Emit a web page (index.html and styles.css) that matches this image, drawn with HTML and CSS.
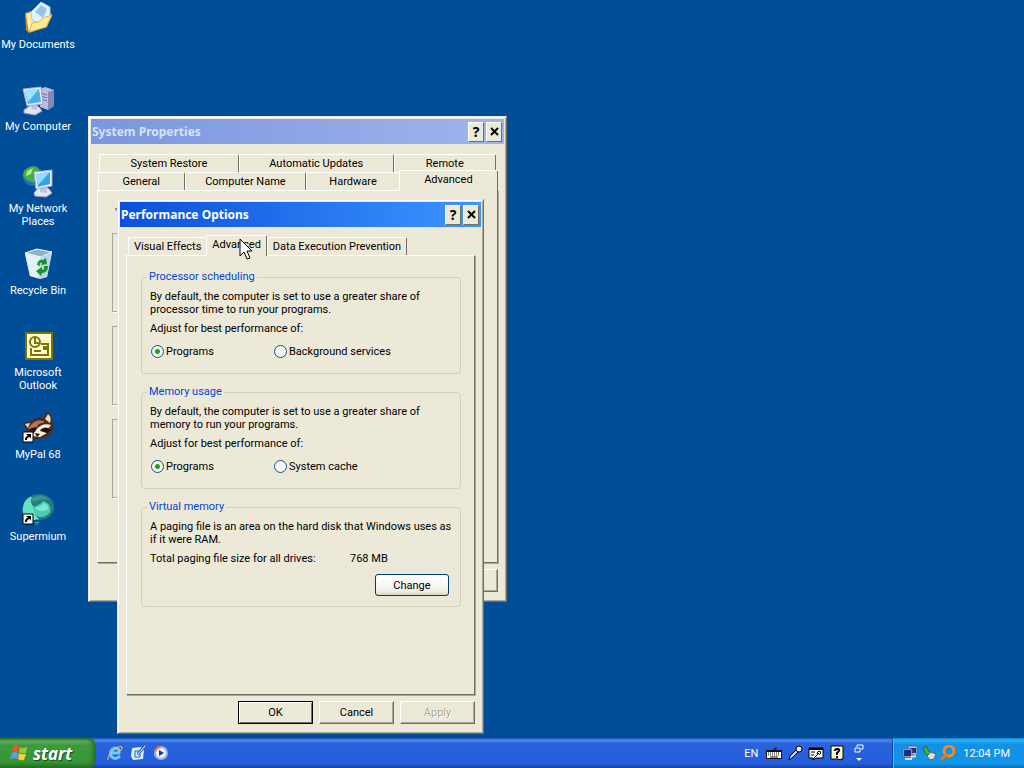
FILE: index.html
```html
<!DOCTYPE html>
<html lang="en">
<head>
    <meta charset="utf-8">
    <title>Desktop</title>
    <link rel="stylesheet" href="styles.css">
</head>
<body>
    <main class="desktop">
        <nav class="icons">
            <a class="icon" href="#documents">
                <svg viewBox="0 0 32 32">
                    <path d="M3 11L9 9L12 13L27 8L30 13L25 25L7 31L4 28Z" fill="#c98f1c"/>
                    <path d="M4 12L9 10L13 14L27 10L25 25L7 30Z" fill="#ffe995"/>
                    <path d="M9 10L19 0L28 5V17L19 22L10 18Z" fill="#e4f2ff" stroke="#a8caec"/>
                    <path d="M13 10L19 3L25 7L21 16Z" fill="#93c5f0"/>
                    <path d="M4 12L7 30L24 25L30 13L21 16L17 20L7 22Z" fill="#ffe27a"/>
                    <path d="M7 30L24 25L30 13L21 16L17 20L10 21Z" fill="#ffeb9c" stroke="#e3b23c"/>
                    <path d="M5 14L7 28L9 22Z" fill="#fff6c4"/>
                </svg>
                <span>My Documents</span>
            </a>
            <a class="icon" href="#computer">
                <svg viewBox="0 0 32 32">
                    <path d="M18 5L23 3L32 6V22L26 26L18 23Z" fill="#b9bce0"/>
                    <path d="M26 8L32 6V22L26 26Z" fill="#8487b8"/>
                    <path d="M19 9L25 11M19 12L25 14M19 15L25 17" stroke="#6b6ea0"/>
                    <path d="M9 21L17 23L20 27L13 31L2 29L2 26Z" fill="#e3e3f3" stroke="#a0a2c8"/>
                    <path d="M10 19L16 20L15 26L9 25Z" fill="#bfc2df"/>
                    <path d="M1 5L19 3L21 20L5 22Z" fill="#e8ecfa" stroke="#9da9cf"/>
                    <path d="M3 7L17 5L19 18L6 20Z" fill="#49aef0"/>
                    <path d="M3 7L17 5L6 18Z" fill="#9be3ff"/>
                </svg>
                <span>My Computer</span>
            </a>
            <a class="icon" href="#network">
                <svg viewBox="0 0 32 32">
                    <circle cx="11" cy="10" r="10" fill="#2470c4"/>
                    <path d="M2 5Q8 -1 15 1L18 6L12 9L12 17L5 14L1 10Z" fill="#46b03a"/>
                    <path d="M5 5L11 2L9 8L4 10Z" fill="#b0ec83"/>
                    <path d="M17 21L26 22L30 27L24 31L13 30L12 27Z" fill="#e6e6f5" stroke="#a2a4ca"/>
                    <path d="M18 20H25V27L18 26Z" fill="#bfc2df"/>
                    <path d="M12 6L30 4V20L14 23Z" fill="#edf2fd" stroke="#9caad0"/>
                    <path d="M14 8L28 6V18L16 21Z" fill="#39a2ee"/>
                    <path d="M14 8L28 6L16 19Z" fill="#91ddff"/>
                </svg>
                <span>My Network Places</span>
            </a>
            <a class="icon" href="#recycle">
                <svg viewBox="0 0 32 32">
                    <path d="M3 5L15 1L30 4L25 29L18 31L8 28Z" fill="#cfe5f1"/>
                    <path d="M3 5L15 1L30 4L19 9Z" fill="#8fb3cc" stroke="#eefaff"/>
                    <path d="M3 6L18 9L16 30L8 28Z" fill="#e4f2f9"/>
                    <path d="M19 9L30 5L25 29L17 31Z" fill="#b5d5e8"/>
                    <path d="M15 17Q16 11 21 12L24 10L25 16L19 17L20 15Q17 14 18 18ZM26 18Q26 25 20 25L19 28L14 23L20 19V22Q23 22 22 18Z" fill="#169423"/>
                </svg>
                <span>Recycle Bin</span>
            </a>
            <a class="icon" href="#outlook">
                <svg viewBox="0 0 32 32">
                    <path d="M3 2H31V30H3Z" fill="#807400"/>
                    <path d="M5 4H29V28H5Z" fill="#fffdd0"/>
                    <path d="M19 14H26V25H9V18" fill="none" stroke="#807400" stroke-width="2"/>
                    <circle cx="13" cy="12" r="5" fill="#fffdd0" stroke="#807400" stroke-width="2"/>
                    <path d="M13 8V13H17M12 21H19" fill="none" stroke="#807400" stroke-width="2"/>
                    <path d="M21 16H25V20H21Z" fill="#807400"/>
                </svg>
                <span>Microsoft Outlook</span>
            </a>
            <a class="icon" href="#mypal">
                <svg viewBox="0 0 32 32">
                    <path d="M2 13Q3 8 8 10Q14 4 21 6L25 0Q30 1 30 9Q33 16 29 21Q23 28 13 27Q5 23 2 13Z" fill="#4c2a1c"/>
                    <path d="M23 7L26 2Q30 5 28 11ZM3 12L8 11L6 16Z" fill="#f1d8c0"/>
                    <path d="M9 13Q15 6 23 10L17 12L13 17L6 17Z" fill="#a67a5c"/>
                    <path d="M14 18Q20 10 29 13L27 16Q21 14 18 19L25 21L18 25L10 24Z" fill="#fbecdc"/>
                    <path d="M18 18Q23 14 29 18L25 21ZM7 17L14 15L13 20Z" fill="#1d100c"/>
                    <path d="M13 21L18 22L15 25Z" fill="#111"/>
                    <path d="M1 20H11V30H1Z" fill="#fff" stroke="#000"/>
                    <path d="M3 28Q3 24 6 24L4 22H9V27L8 25Q5 25 5 28Z"/>
                </svg>
                <span>MyPal 68</span>
            </a>
            <a class="icon" href="#supermium">
                <svg viewBox="0 0 32 32">
                    <ellipse cx="17" cy="13" rx="15" ry="13" fill="#247b80"/>
                    <path d="M2 9Q6 2 10 3Q7 9 13 14Q12 20 17 25L8 27Q-1 22 1 13Z" fill="#66e2c3"/>
                    <path d="M9 5Q18 -2 28 6Q20 4 11 8Z" fill="#3b9590"/>
                    <path d="M11 13Q18 11 21 7Q30 10 28 18Q24 24 17 23Q11 20 11 13Z" fill="#4acdb4"/>
                    <path d="M13 14Q20 12 22 9Q27 12 26 15Q20 20 13 14Z" fill="#7be8d0"/>
                    <path d="M12 29L17 28L14 31" fill="none" stroke="#35b6ae"/>
                    <path d="M1 20H11V30H1Z" fill="#fff" stroke="#000"/>
                    <path d="M3 28Q3 24 6 24L4 22H9V27L8 25Q5 25 5 28Z"/>
                </svg>
                <span>Supermium</span>
            </a>
        </nav>

        <section class="window system">
            <header class="titlebar inactive">
                <h2>System Properties</h2>
                <button class="caption" aria-label="Help">?</button>
                <button class="caption" aria-label="Close"><svg viewBox="0 0 9 9"><path d="M1 1L8 8M8 1L1 8"/></svg></button>
            </header>
            <div class="tabs back-row">
                <button class="tab">System Restore</button>
                <button class="tab">Automatic Updates</button>
                <button class="tab">Remote</button>
            </div>
            <div class="tabs front-row">
                <button class="tab">General</button>
                <button class="tab">Computer Name</button>
                <button class="tab">Hardware</button>
                <button class="tab active">Advanced</button>
            </div>
            <div class="panel">
                <p>'</p>
                <div class="section"></div>
                <div class="section"></div>
                <div class="section"></div>
            </div>
            <footer class="buttons">
                <button class="btn" aria-label="Apply"></button>
            </footer>
        </section>

        <section class="window performance">
            <header class="titlebar">
                <h2>Performance Options</h2>
                <button class="caption" aria-label="Help">?</button>
                <button class="caption" aria-label="Close"><svg viewBox="0 0 9 9"><path d="M1 1L8 8M8 1L1 8"/></svg></button>
            </header>
            <div class="tabs">
                <button class="tab">Visual Effects</button>
                <button class="tab active">Advanced</button>
                <button class="tab">Data Execution Prevention</button>
            </div>
            <div class="panel">
                <fieldset>
                    <legend>Processor scheduling</legend>
                    <p>By default, the computer is set to use a greater share of processor time to run your programs.</p>
                    <p>Adjust for best performance of:</p>
                    <div class="choices">
                        <label><input type="radio" name="cpu" checked>Programs</label>
                        <label><input type="radio" name="cpu">Background services</label>
                    </div>
                </fieldset>
                <fieldset>
                    <legend>Memory usage</legend>
                    <p>By default, the computer is set to use a greater share of memory to run your programs.</p>
                    <p>Adjust for best performance of:</p>
                    <div class="choices">
                        <label><input type="radio" name="memory" checked>Programs</label>
                        <label><input type="radio" name="memory">System cache</label>
                    </div>
                </fieldset>
                <fieldset>
                    <legend>Virtual memory</legend>
                    <p>A paging file is an area on the hard disk that Windows uses as if it were RAM.</p>
                    <p class="total"><span>Total paging file size for all drives:</span><span>768 MB</span></p>
                    <button class="change">Change</button>
                </fieldset>
            </div>
            <footer class="buttons">
                <button class="btn default">OK</button>
                <button class="btn">Cancel</button>
                <button class="btn" disabled>Apply</button>
            </footer>
        </section>

        <svg class="cursor" viewBox="0 0 13 22">
            <path d="M1 1V18L5 14L8 21L11 20L8 13H13Z" fill="#fff" stroke="#000"/>
        </svg>
    </main>

    <footer class="taskbar">
        <button class="start">
            <svg viewBox="0 0 20 20">
                <path d="M4 3Q7 1 10 3L9 9Q6 7 3 9Z" fill="#f0552b"/>
                <path d="M11 4Q14 6 18 4L17 10Q13 11 10 9Z" fill="#8dcc43"/>
                <path d="M3 10Q6 8 9 10L8 16Q5 14 1 16Z" fill="#5b9bf5"/>
                <path d="M10 10Q13 12 17 11L15 17Q12 18 9 16Z" fill="#ffd033"/>
            </svg>
            start
        </button>
        <div class="quick">
            <svg viewBox="0 0 16 16">
                <path d="M13 11Q8 16 4 11Q2 5 8 3Q13 3 12 8H5" fill="none" stroke="#71c9ff" stroke-width="3"/>
                <path d="M1 15Q0 10 8 4Q14 0 15 2Q16 4 13 6" fill="none" stroke="#efc64d"/>
            </svg>
            <svg viewBox="0 0 16 16">
                <path d="M2 3L11 2L14 5L13 14L3 15L1 11Z" fill="#d8effd"/>
                <path d="M10 6H5V12H10V9H7" fill="none" stroke="#2462a8"/>
                <path d="M8 9L14 2" stroke="#2462a8" stroke-width="3"/>
                <path d="M8 9L15 1" stroke="#fff"/>
            </svg>
            <svg viewBox="0 0 16 16">
                <circle cx="8" cy="8" r="6" fill="#e9f0fa" stroke="#9fb6d8" stroke-width="2"/>
                <path d="M2 7Q3 2 8 2" fill="none" stroke="#ed7b31" stroke-width="2"/>
                <path d="M6 5L11 8L6 11Z" fill="#163f91"/>
            </svg>
        </div>
        <div class="language">
            <span>EN</span>
            <svg viewBox="0 0 16 16">
                <path d="M8 5Q8 3 11 3" fill="none" stroke="#000"/>
                <path d="M0 5H16V14H0Z" fill="#111"/>
                <path d="M1 7H15V13H1Z" fill="#fff"/>
                <path d="M2 8H14M2 10H14" stroke="#111" stroke-dasharray="1 1"/>
                <path d="M4 12H12" stroke="#111"/>
            </svg>
            <svg viewBox="0 0 16 16">
                <path d="M2 15L3 11L10 4L12 6L5 13Z" fill="#cfd6e6" stroke="#000"/>
                <circle cx="12" cy="4" r="3" fill="#e9edf5" stroke="#000"/>
            </svg>
            <svg viewBox="0 0 16 16">
                <path d="M1 3H15V13H8L5 15V13H1Z" fill="#fff" stroke="#000"/>
                <path d="M1 3H15V5H1Z"/>
                <path d="M3 7H7M3 10H6M5 14L11 8M9 9Q9 6 12 6Q14 8 11 10" fill="none" stroke="#000"/>
            </svg>
            <svg viewBox="0 0 16 16">
                <path d="M2 1H14V14H12V15L9 14H2Z" fill="#fffcd0" stroke="#000"/>
                <path d="M6 6Q6 4 8 4Q11 4 10 6L8 8V10M8 11V13" fill="none" stroke="#000" stroke-width="2"/>
            </svg>
            <svg class="toolbar-menu" viewBox="0 0 10 20">
                <path d="M3 4V2H9V6H7M1 5H6V9H1Z" fill="none" stroke="#fff"/>
                <path d="M2 15H8L5 18Z" fill="#fff"/>
            </svg>
        </div>
        <div class="tray">
            <svg viewBox="0 0 16 16">
                <path d="M6 1H15V10H6Z" fill="#b9c7e6" stroke="#57678f"/>
                <path d="M8 3H14V8H8Z" fill="#1a347f"/>
                <path d="M1 4H10V12H1Z" fill="#c9d5ee" stroke="#52618a"/>
                <path d="M2 5H9V11H2Z" fill="#16307d"/>
                <path d="M3 14H10M9 12L14 11" stroke="#d9dff0" stroke-width="2"/>
            </svg>
            <svg viewBox="0 0 16 16">
                <path d="M2 3L5 1L7 5L11 9L9 12L4 8Z" fill="#3cb843" stroke="#176b2d"/>
                <path d="M6 11L10 7L15 9L13 14L9 15Z" fill="#d7dcdc" stroke="#58656b"/>
            </svg>
            <svg viewBox="0 0 16 16">
                <circle cx="9" cy="6" r="5" fill="none" stroke="#f28b1e" stroke-width="3"/>
                <path d="M6 10L1 15" stroke="#e47714" stroke-width="3"/>
            </svg>
            <time>12:04 PM</time>
        </div>
    </footer>
</body>
</html>
```

FILE: styles.css
```css
* {
    box-sizing: border-box;
}
body {
    margin: 0;
    min-height: 100vh;
    display: flex;
    flex-direction: column;
    background: #004e98;
    font: 11px/13px Roboto, sans-serif;
    color: #000;
    overflow: hidden;
}
button {
    font: inherit;
    color: inherit;
    padding: 0;
}
h2, p {
    margin: 0;
}
.desktop {
    flex: 1;
    position: relative;
}

/* Desktop icons */
.icons {
    width: 76px;
    display: flex;
    flex-direction: column;
}
.icon {
    height: 82px;
    padding-top: 2px;
    display: flex;
    flex-direction: column;
    align-items: center;
    gap: 4px;
    color: #fff;
    text-align: center;
    text-decoration: none;
}
.icon svg {
    width: 32px;
    height: 32px;
}

/* Windows */
.window {
    position: absolute;
    display: flex;
    flex-direction: column;
    padding: 2px;
    background: #ece9d8;
    border: 1px solid;
    border-color: #ece9d8 #716f64 #716f64 #ece9d8;
    box-shadow: inset 1px 1px #fff, inset -1px -1px #aca899;
}
.system {
    left: 88px;
    top: 116px;
    width: 419px;
}
.performance {
    left: 117px;
    top: 199px;
    width: 367px;
}
.titlebar {
    height: 25px;
    display: flex;
    align-items: center;
    gap: 2px;
    padding: 0 2px 0 1px;
    background: linear-gradient(to right, #0a50dc, #3d95ff);
    color: #fff;
}
.inactive {
    background: linear-gradient(to right, #7b96df, #a0b4ec);
    color: #d5e2fa;
}
.titlebar h2 {
    flex: 1;
    font-family: "Noto Sans", sans-serif;
    font-size: 12px;
    line-height: 25px;
}
.caption {
    width: 16px;
    height: 20px;
    background: #ece9d8;
    border: 1px solid;
    border-color: #fff #716f64 #716f64 #fff;
    color: #000;
    font-family: "Noto Sans", sans-serif;
    font-size: 14px;
    font-weight: bold;
    display: flex;
    align-items: center;
    justify-content: center;
}
.caption svg {
    width: 9px;
    height: 9px;
    stroke: #000;
    stroke-width: 2;
}

/* Tabs */
.tabs {
    display: flex;
    align-items: flex-end;
    margin: 10px 6px 0;
    padding-left: 2px;
}
.tab {
    height: 18px;
    background: #ece9d8;
    border: 1px solid;
    border-color: #fff #716f64 transparent #fff;
    border-bottom: 0;
    border-radius: 2px 2px 0 0;
}
.tab.active {
    height: 21px;
    margin-bottom: -1px;
    padding-bottom: 4px;
    z-index: 1;
}
.tab:has(+ .active) {
    border-right: 0;
}
.back-row {
    padding-right: 2px;
}
.back-row .tab {
    flex: 140;
}
.back-row .tab:nth-child(2) {
    flex: 155;
}
.back-row .tab:nth-child(3) {
    flex: 102;
}
.front-row {
    margin-top: -2px;
    padding-left: 1px;
}
.front-row .tab {
    flex: 86;
}
.front-row .tab:nth-child(2) {
    flex: 122;
}
.front-row .tab:nth-child(3) {
    flex: 93;
}
.front-row .tab.active {
    flex: 99;
}
.performance .tabs {
    margin-top: 8px;
}
.performance .tab {
    padding: 0 5px;
}
.performance .tab.active {
    padding-bottom: 4px;
}
.panel {
    margin: 0 6px;
    border: 1px solid;
    border-color: #fff #716f64 #716f64 #fff;
    box-shadow: 1px 1px #aca899;
}
.system .panel {
    min-height: 373px;
    padding: 15px 14px;
    display: flex;
    flex-direction: column;
    gap: 14px;
}
.system .panel p {
    padding-left: 3px;
}
.section {
    height: 79px;
    border: 1px solid #aca899;
    box-shadow: 1px 1px #fff;
}
.performance .panel {
    min-height: 440px;
    padding: 14px 13px 14px 14px;
    display: flex;
    flex-direction: column;
    gap: 11px;
}

/* Option groups */
fieldset {
    min-width: 0;
    margin: 0;
    padding: 6px 8px 15px;
    border: 1px solid #d0d0bf;
    border-radius: 4px;
}
legend {
    margin-left: -3px;
    padding: 0 2px;
    line-height: 14px;
    color: #0046d5;
}
fieldset p + p {
    margin-top: 6px;
}
.choices {
    display: grid;
    grid-template-columns: 123px 1fr;
    margin-top: 10px;
}
.choices label {
    display: flex;
    align-items: center;
    gap: 2px;
}
input[type="radio"] {
    appearance: none;
    width: 13px;
    height: 13px;
    margin: 0 0 0 1px;
    border: 1px solid #1c5180;
    border-radius: 50%;
    background: #f6f6f1;
}
input[type="radio"]:checked {
    background: radial-gradient(circle, #21a121 0 2px, #f6f6f1 3px);
}
.total {
    display: grid;
    grid-template-columns: 200px 1fr;
}
.change {
    display: block;
    width: 74px;
    height: 22px;
    margin: 9px 3px 0 auto;
    border: 1px solid #003c74;
    border-radius: 3px;
    background: linear-gradient(#fff, #f3f2ea 80%, #d8d0c4);
}
fieldset:last-child {
    padding-bottom: 10px;
}

/* Dialog buttons */
.buttons {
    display: flex;
    justify-content: flex-end;
    gap: 6px;
    margin: 6px 6px 7px;
}
.btn {
    width: 75px;
    height: 23px;
    background: #ece9d8;
    border: 1px solid;
    border-color: #fff #716f64 #716f64 #fff;
    box-shadow: inset -1px -1px #aca899;
}
.btn.default {
    border-color: #000;
    box-shadow: inset 1px 1px #fff, inset -1px -1px #716f64;
}
.btn:disabled {
    color: #aca899;
    text-shadow: 1px 1px #fff;
}
.cursor {
    position: absolute;
    left: 239px;
    top: 238px;
    z-index: 2;
    width: 13px;
    height: 22px;
}

/* Taskbar */
.taskbar {
    height: 30px;
    display: flex;
    align-items: stretch;
    background: linear-gradient(#1f4fb5, #4a8cf0 8%, #2b62dd 18%, #245edb 85%, #1941a5);
    color: #fff;
}
.taskbar svg {
    width: 16px;
    height: 16px;
}
.start {
    width: 96px;
    display: flex;
    align-items: center;
    gap: 4px;
    padding-left: 9px;
    border: 0;
    border-radius: 0 8px 8px 0;
    background: linear-gradient(#2a6d2b, #62ac61 10%, #3c9a3c 25%, #379637 80%, #246d24);
    box-shadow: inset -3px 0 4px #246d24;
    color: #fff;
    font: italic bold 17px "Open Sans", sans-serif;
    text-shadow: 1px 1px 1px #174c17;
}
.start svg {
    width: 20px;
    height: 20px;
}
.quick {
    flex: 1;
    display: flex;
    align-items: center;
    gap: 7px;
    padding-left: 11px;
}
.language {
    display: flex;
    align-items: center;
    gap: 5px;
    padding-right: 28px;
}
.language span {
    margin-right: 3px;
}
.taskbar .toolbar-menu {
    width: 10px;
    height: 20px;
    margin-left: 4px;
}
.tray {
    display: flex;
    align-items: center;
    gap: 3px;
    padding: 0 14px 0 9px;
    background: linear-gradient(#1286d4, #2bb4f5 8%, #1290e8 20%, #1395e6 85%, #0b6cb8);
    border-left: 1px solid #0a4fa8;
    box-shadow: inset 1px 0 #3cc0f5;
}
.tray time {
    margin-left: 4px;
}
```
